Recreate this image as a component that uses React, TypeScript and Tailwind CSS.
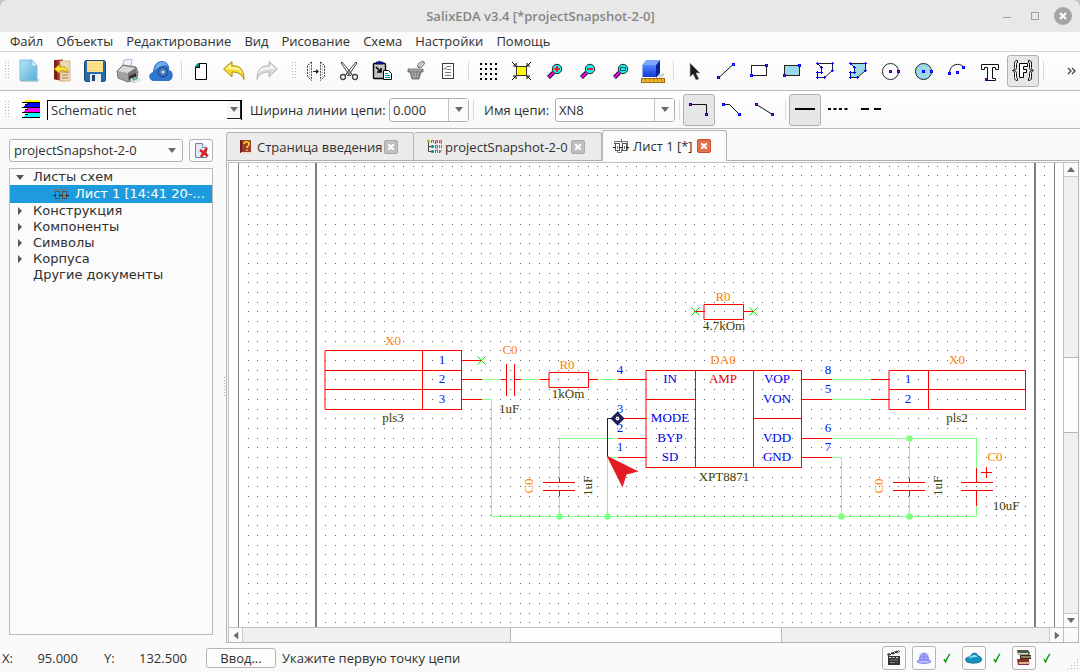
import React, { useState } from "react";

type Kids = { children?: React.ReactNode };

/* ---------- shared pieces ---------- */

function Glyph({ children }: Kids) {
  return (
    <svg width="24" height="24" viewBox="0 0 24 24" fill="none" aria-hidden="true">
      {children}
    </svg>
  );
}

function Tool({ label, pressed, children }: Kids & { label: string; pressed?: boolean }) {
  return (
    <button
      type="button"
      aria-label={label}
      aria-pressed={pressed}
      className={
        pressed
          ? "mr-px flex h-8 w-8 shrink-0 items-center justify-center rounded-[3px] border border-[#b0b0b0] bg-[#e6e6e6]"
          : "mr-px flex h-8 w-8 shrink-0 items-center justify-center rounded-[3px] border border-transparent"
      }
    >
      {children}
    </button>
  );
}

function Sep() {
  return (
    <span className="flex w-[7px] shrink-0 justify-center">
      <span className="h-5 w-px bg-[#dadada]" />
    </span>
  );
}

function Grip() {
  return (
    <svg width="5" height="18" viewBox="0 0 5 18" fill="#b4b4b4" className="shrink-0" aria-hidden="true">
      {[0, 3, 6, 9, 12, 15].map((y) => (
        <g key={y}>
          <rect x="0" y={y} width="1" height="1" />
          <rect x="3" y={y} width="1" height="1" />
        </g>
      ))}
    </svg>
  );
}

function Down({ className = "" }: { className?: string }) {
  return (
    <svg width="8" height="5" viewBox="0 0 8 5" fill="#6a6a6a" className={className} aria-hidden="true">
      <path d="M0 0h8L4 5z" />
    </svg>
  );
}

/* ---------- toolbar drawings ---------- */

const NewIcon = () => (
  <Glyph>
    <defs>
      <linearGradient id="sheet" x1="0" y1="0" x2="1" y2="1">
        <stop offset="0" stopColor="#b9e4f5" />
        <stop offset="1" stopColor="#55aed6" />
      </linearGradient>
    </defs>
    <path d="M6 20h16v2l-2 1H4z" fill="#c8c8c8" />
    <path d="M3 1h12l5 6v14.500H3z" fill="url(#sheet)" stroke="#7cc0de" />
    <path d="M15 1v6h5z" fill="#e4f5fc" stroke="#6fb6d6" strokeWidth=".7" />
  </Glyph>
);

const OpenIcon = () => (
  <Glyph>
    <path d="M4 1l9-.5v22L4 20z" fill="#a5342c" />
    <path d="M4 1l3 1v19l-3-1z" fill="#7c1f1b" />
    <path d="M10 2h10v20H10z" fill="#eed9b4" stroke="#c9a878" strokeWidth=".8" />
    <path d="M12 13h6M12 16h6M12 19h6" stroke="#a67f55" />
    <path d="M4 10l6-5v3c5-1 8 1 8 6-2-2-5-3-8-2v3z" fill="#ffe02b" stroke="#a37a06" strokeWidth=".7" />
  </Glyph>
);

const SaveIcon = () => (
  <Glyph>
    <rect x="1.500" y="1.500" width="21" height="21" rx="2" fill="#2a6aa8" stroke="#1a4474" />
    <rect x="4" y="2" width="16" height="11" fill="#ffe596" />
    <path d="M4 5h16M4 8h16M4 11h16" stroke="#f5cf62" />
    <rect x="7" y="15" width="11" height="8" fill="#e8eef5" />
    <rect x="9" y="16" width="3" height="6" fill="#1d426e" />
  </Glyph>
);

const PrintIcon = () => (
  <Glyph>
    <path d="M6 8L8 1l8-1-1 9z" fill="#edf3fb" stroke="#92a5bf" strokeWidth=".8" />
    <path d="M1 12l6-6 13 2 2 5-1 7-9 3-10-4z" fill="#a2a2a2" stroke="#5f5f5f" strokeWidth=".8" />
    <path d="M2 12l5-5 12 2-7 5z" fill="#d9d9d9" />
    <path d="M12 14l8-5 1 9-9 4z" fill="#777" />
    <path d="M13 17l7-3v4l-7 3z" fill="#333" />
    <path d="M14 20l7-2 3 3-7 3z" fill="#f3f5f8" stroke="#8fa3bc" strokeWidth=".6" />
    <path d="M16 20l3-1 1 2-3 1z" fill="#45b74a" />
    <path d="M20 19l1 1" stroke="#3f68d8" strokeWidth="2" />
  </Glyph>
);

const CloudIcon = () => (
  <Glyph>
    <path d="M4 22c-5-1-5-8 0-9C4 8 7 2 13 2c5 0 8 5 7 9 5 1 5 9 0 11z" fill="#2f74cf" />
    <path d="M5 12c1-5 4-9 8-9 3 0 5 2 6 4-4-2-9 0-14 5z" fill="#74aaee" />
    <circle cx="14" cy="13" r="4.500" fill="#6c98d8" stroke="#1f4c90" strokeWidth="1.300" />
    <path d="M14 8v10M9 13h10M10.500 9.500l7 7M17.500 9.500l-7 7" stroke="#1f4c90" strokeWidth=".9" />
    <circle cx="14" cy="13" r="1.600" fill="#cfe0f8" />
  </Glyph>
);

const PageIcon = () => (
  <Glyph>
    <path d="M10.500 4.500h7v16h-11v-12z" fill="#fff" stroke="#000" />
    <path d="M6 9V7l3-3h2v5z" fill="#0b8a83" />
    <path d="M6.500 8.500h4v-4" stroke="#000" />
  </Glyph>
);

const UndoIcon = () => (
  <Glyph>
    <path d="M1.500 10L10 2.500V7c8-1 12 4 12 13.500-2-5-5.500-7.500-12-7.500v5z" fill="#f6dc22" stroke="#a88a18" />
    <path d="M3.500 10L9 5v3c6-.5 10 1 12 7-3-4-7-5-12-4.500z" fill="#fff59a" />
  </Glyph>
);

const RedoIcon = () => (
  <Glyph>
    <path d="M22.500 10L14 2.500V7C6 6 2 11 2 20.500c2-5 5.500-7.500 12-7.500v5z" fill="#d9d9d9" stroke="#b7b7b7" />
    <path d="M20.500 10L15 5v3c-6-.5-10 1-12 7 3-4 7-5 12-4.500z" fill="#f4f4f4" />
  </Glyph>
);

const MirrorIcon = () => (
  <Glyph>
    <path d="M3.500 6.500l4-4v19l-4-4zM20.500 6.500l-4-4v19l4-4z" stroke="#4a4a4a" strokeDasharray="2 1" />
    <path d="M5.500 5v14M18.500 5v14" stroke="#aaa" strokeDasharray="1 1" />
    <path d="M9 12.500h4" stroke="#222" />
    <path d="M12 10l3 2.500-3 2.500z" fill="#222" />
  </Glyph>
);

const CutIcon = () => (
  <Glyph>
    <path d="M4 4l1-1 10 12-2 2zM20 4l-1-1L9 15l2 2z" fill="#fff" stroke="#444" />
    <circle cx="6" cy="18" r="2.500" stroke="#444" strokeWidth="1.300" />
    <circle cx="18" cy="18" r="2.500" stroke="#444" strokeWidth="1.300" />
    <path d="M8 16.500l4-4 4 4" stroke="#444" />
  </Glyph>
);

const PasteIcon = () => (
  <Glyph>
    <rect x="3.500" y="4.500" width="12" height="15" rx="1" fill="#c4c4c4" stroke="#000" strokeWidth="1.400" />
    <path d="M6 5h7V3h-2L9.500 2 8 3H6z" fill="#1414d8" stroke="#000" strokeWidth=".6" />
    <path d="M6 8l5 5M11 9v4H7" stroke="#000" strokeWidth="1.600" />
    <path d="M13.500 11.500h5l3 3v6h-8z" fill="#fff" stroke="#000" />
    <path d="M15 14.500h3M15 16.500h5M15 18.500h5" stroke="#00a8c8" />
  </Glyph>
);

const BinIcon = () => (
  <Glyph>
    <path d="M5 10h15v3h-2l-2 7H9l-2-7H5z" fill="#8b8b8b" stroke="#5f5f5f" strokeWidth=".8" />
    <path d="M6 11h13" stroke="#b9b9b9" />
    <path d="M9.500 14l1 5M12.500 14v5M15.500 14l-1 5" stroke="#bcbcbc" strokeWidth=".7" />
    <ellipse cx="18" cy="5.500" rx="3.800" ry="2" transform="rotate(-38 18 5.500)" fill="#fff" stroke="#666" />
    <path d="M15.500 7.500l5-4" stroke="#666" strokeWidth=".8" />
  </Glyph>
);

const ListIcon = () => (
  <Glyph>
    <rect x="6.500" y="4.500" width="11" height="15" fill="#fff" stroke="#3a3a3a" />
    <path d="M11 7.500h4M11 10.500h4M9 13.500h6M9 16.500h6M8 9l1 1.500 2-3" stroke="#777" />
  </Glyph>
);

const GridIcon = () => (
  <Glyph>
    {[4, 9, 14, 19].map((y) =>
      [4, 9, 14, 19].map((x) => <rect key={`${x}-${y}`} x={x} y={y} width="2" height="2" fill="#000" />)
    )}
  </Glyph>
);

const FitIcon = () => (
  <Glyph>
    <rect x="7.500" y="7.500" width="10" height="9" fill="#ff0" stroke="#333" />
    <path
      d="M3 3l4 4M7 4v3H4M22 3l-4 4M18 4v3h3M3 21l4-4M4 17h3v3M22 21l-4-4M21 17h-3v3"
      stroke="#000"
    />
  </Glyph>
);

function Lens({ children }: Kids) {
  return (
    <Glyph>
      <path d="M6.500 18.500l5-5" stroke="#000" strokeWidth="4" />
      <path d="M6.500 18.500l5-5" stroke="#f0f" strokeWidth="2.200" />
      <circle cx="15" cy="10" r="4.700" fill="#18f0f0" stroke="#222" />
      {children}
    </Glyph>
  );
}

const CubeIcon = () => (
  <Glyph>
    <defs>
      <linearGradient id="face" x1="0" y1="0" x2="0" y2="1">
        <stop offset="0" stopColor="#4f86ff" />
        <stop offset="1" stopColor="#1238d8" />
      </linearGradient>
    </defs>
    <path d="M17 16l6-2v3l-5 2z" fill="#cfcfcf" />
    <path d="M1 6l4-5h14l-4 5z" fill="#7ea8ff" />
    <path d="M15 6l4-5v13l-4 5z" fill="#0a249c" />
    <rect x="1.500" y="6" width="13.500" height="12" fill="url(#face)" />
    <rect x=".5" y="19.500" width="23" height="4" fill="#f2b733" stroke="#9c6a11" />
    <path d="M4.500 20v2M8.500 20v2M12.500 20v2M16.500 20v2M20.500 20v2" stroke="#b0781a" />
  </Glyph>
);

const CursorIcon = () => (
  <Glyph>
    <path d="M9 4v14l3-3 3 6 3-1-3-6h4z" fill="#1c1c1c" stroke="#aaa" strokeWidth=".7" />
  </Glyph>
);

function Node({ x, y }: { x: number; y: number }) {
  return (
    <g shapeRendering="crispEdges">
      <rect x={x - 1} y={y - 1} width="3" height="3" fill="#00f" />
      <rect x={x} y={y} width="1" height="1" fill="#d02050" />
    </g>
  );
}

const PolyIcon = ({ fill }: { fill: string }) => (
  <Glyph>
    <path d="M4.500 4.500h15v7l-8 7h-7v-5h4v-5z" fill={fill} stroke="#222" />
    {[[4, 4], [19, 4], [19, 11], [11, 18], [4, 18], [4, 13], [8, 13], [8, 8]].map(([x, y]) => (
      <path key={`${x}-${y}`} d={`M${x - 1} ${y + 0.5}h3M${x + 0.5} ${y - 1}v3`} stroke="#00f" />
    ))}
  </Glyph>
);

const TextIcon = () => (
  <Glyph>
    <path d="M3.500 5.500h17v5h-3v-2h-3v11h3v2h-10v-2h2v-11h-3v2h-3z" fill="#fff" stroke="#111" />
    <Node x={8} y={20} />
  </Glyph>
);

const FieldIcon = () => (
  <Glyph>
    <path
      d="M6.500 1.500c-3 0-3 2-3 4v3c0 2-1 3-2 3 1 0 2 1 2 3v3c0 2 0 4 3 4v-2c-1 0-1-1-1-2v-3c0-1-1-3-2-3 1 0 2-2 2-3v-3c0-1 0-2 1-2zM17.500 1.500c3 0 3 2 3 4v3c0 2 1 3 2 3-1 0-2 1-2 3v3c0 2 0 4-3 4v-2c1 0 1-1 1-2v-3c0-1 1-3 2-3-1 0-2-2-2-3v-3c0-1 0-2-1-2z"
      fill="#fff"
      stroke="#000"
    />
    <path d="M8.500 4.500h8v3h-4v3h3v3h-3v5h-4z" fill="#fff" stroke="#000" />
  </Glyph>
);

/* Small two-block schematic used for sheets. */
function SheetIcon() {
  return (
    <svg width="16" height="15" viewBox="0 0 16 15" fill="none" aria-hidden="true" className="shrink-0">
      <path d="M1.500 5V2.500H14.500V11.500M8.500 0v4M4.500 12v1.500h4V10" stroke="#777" />
      <rect x="2.500" y="4.500" width="4" height="7" stroke="#555" />
      <rect x="9.500" y="4.500" width="4" height="7" stroke="#555" />
      <path d="M0 8.500h3M6 8.500h4M13 8.500h3" stroke="#222" />
      <path d="M4 7h1v3H4zM11 7h1v3h-1z" fill="#777" />
    </svg>
  );
}

function Cross({ active }: { active?: boolean }) {
  return (
    <button
      type="button"
      aria-label="Закрыть вкладку"
      className={
        active
          ? "flex h-[14px] w-[14px] items-center justify-center rounded-[2px] border border-[#cf4c30] bg-[#e4714f]"
          : "flex h-[14px] w-[14px] items-center justify-center rounded-[2px] border border-[#a8a8a8] bg-[#c0c0c0]"
      }
    >
      <svg width="6" height="6" viewBox="0 0 6 6" stroke="#fff" strokeWidth="2" aria-hidden="true">
        <path d="M0 0l6 6M6 0L0 6" />
      </svg>
    </button>
  );
}

/* ---------- schematic ---------- */

const STEP = 9.715;
const dots = (() => {
  let d = "";
  for (let j = 0; j < 48; j++) {
    const y = Math.round(165.7 + j * STEP);
    for (let i = -8; i < 76; i++) d += `M${Math.round(325.3 + i * STEP)} ${y}h1`;
  }
  return d;
})();

type Label = [string, number, number];

const refs: Label[] = [
  ["X0", 393, 345], ["C0", 510, 354], ["R0", 567, 369], ["R0", 723, 301],
  ["DA0", 723, 364], ["X0", 957, 364], ["C0", 995, 461],
];
const values: Label[] = [
  ["pls3", 393, 422], ["1uF", 509, 413], ["1kOm", 568, 398], ["4.7kOm", 724, 330],
  ["XPT8871", 724, 481], ["pls2", 957, 422], ["10uF", 1006, 510],
];
const pins: Label[] = [
  ["1", 442, 364], ["2", 442, 383], ["3", 442, 403], ["4", 620, 374], ["3", 620, 413],
  ["2", 620, 432], ["1", 620, 451], ["8", 828, 374], ["5", 828, 393], ["6", 828, 432],
  ["7", 828, 451], ["1", 908, 383], ["2", 908, 403],
];
const names: Label[] = [
  ["IN", 670, 383], ["MODE", 670, 422], ["BYP", 670, 442], ["SD", 670, 461],
  ["VOP", 777, 383], ["VON", 777, 403], ["VDD", 777, 442], ["GND", 777, 461],
];

function Labels({ items, fill }: { items: Label[]; fill: string }) {
  return (
    <g fill={fill}>
      {items.map(([t, x, y]) => (
        <text key={`${t}-${x}-${y}`} x={x} y={y}>
          {t}
        </text>
      ))}
    </g>
  );
}

function Schematic() {
  return (
    <svg
      className="absolute inset-0 h-full w-full font-['Liberation_Serif',serif] text-[13px]"
      fill="none"
      role="img"
      aria-label="Лист 1"
    >
      <g transform="translate(-229 -163)">
        <g shapeRendering="crispEdges">
          <path d={dots} transform="translate(0 .5)" stroke="#606060" />
          <path d="M238.500 163V1200M1054.500 163V1200" stroke="#808080" />
          <path d="M316 163V1200M1035 163V1200" stroke="#808080" strokeWidth="2" />
        </g>
        <g textAnchor="middle">
          <Labels items={refs} fill="#ff8000" />
          <Labels items={values} fill="#404000" />
          <Labels items={pins} fill="#0020ff" />
          <Labels items={names} fill="#0000f0" />
          <text x="723" y="383" fill="#f00000">AMP</text>
          <text transform="translate(533 486) rotate(-90)" fill="#ff8000">C0</text>
          <text transform="translate(592 486) rotate(-90)" fill="#404000">1uF</text>
          <text transform="translate(883 486) rotate(-90)" fill="#ff8000">C0</text>
          <text transform="translate(942 486) rotate(-90)" fill="#404000">1uF</text>
        </g>
        <g transform="translate(.5 .5)">
          <path
            stroke="#80ff80"
            strokeLinecap="square"
            d="M481 379H501M481 399H491V516H976V505M520 379H540M597 379H618M618 438H559V478M559 495V516M618 457H607V516M831 379H871M831 399H871M831 438H976V468M831 457H841V516M909 438V478M909 495V516"
          />
          <path
            stroke="#f00"
            strokeLinecap="square"
            d="M325 350H461V409H325ZM422 350V409M325 370H461M325 389H461M461 360H481M461 379H481M461 399H481M501 379H506M506 364V395M514 364V395M514 379H520M540 379H549M549 372H588V387H549ZM588 379H597M618 379H646M646 370H801V467H646ZM695 370V467M753 370V467M646 399H695M753 418H801M622 418H646M618 438H646M618 457H646M801 379H831M801 399H831M801 438H831M801 457H831M871 379H889M871 399H889M889 370H1025V409H889ZM928 370V409M889 389H1025M704 304H743V319H704ZM695 311H704M743 311H753M559 478V482M559 490V495M543 482H574M543 490H574M909 478V482M909 490V495M893 482H924M893 490H924M976 468V482M976 490V505M961 482H992M961 490H992M981 472H991M986 467V477"
          />
          <path d="M477 356l8 8M477 364l8-8M691 307l8 8M691 315l8-8M749 307l8 8M749 315l8-8" stroke="#00e000" />
          {[[909, 438], [559, 516], [607, 516], [841, 516], [909, 516]].map(([x, y]) => (
            <circle key={`${x}-${y}`} cx={x} cy={y} r="3.200" fill="#80ff80" />
          ))}
          <path d="M617 418H607V456" stroke="#1f1a5c" />
          <path d="M617 411l7 7-7 7-7-7z" fill="#1f1a5c" />
          <circle cx="617" cy="418" r="1.900" fill="#fff" />
          <circle cx="617" cy="418" r=".8" fill="#20a020" />
          <path d="M606 455L638 471L626 474L622 487Z" fill="#e31b23" />
        </g>
      </g>
    </svg>
  );
}

/* ---------- page ---------- */

const menus = ["Файл", "Объекты", "Редактирование", "Вид", "Рисование", "Схема", "Настройки", "Помощь"];
const folders = ["Конструкция", "Компоненты", "Символы", "Корпуса"];

function EditCombo({ id, initial, className }: { id: string; initial: string; className: string }) {
  const [value, setValue] = useState(initial);
  return (
    <div className={`flex h-6 shrink-0 rounded-[3px] border border-[#b0b0b0] bg-white ${className}`}>
      <input
        id={id}
        value={value}
        onChange={(e) => setValue(e.target.value)}
        className="min-w-0 flex-1 bg-transparent pl-[3px] outline-none"
      />
      <button
        type="button"
        aria-label="Открыть список"
        className="flex w-5 items-center justify-center border-l border-[#c4c4c4] bg-[#fbfbfb]"
      >
        <Down />
      </button>
    </div>
  );
}

function StatusButton({ label, children }: Kids & { label: string }) {
  return (
    <button
      type="button"
      aria-label={label}
      className="flex h-6 w-6 items-center justify-center rounded-[3px] border border-[#b4b4b4] bg-[#fcfcfc]"
    >
      <svg width="18" height="18" viewBox="0 0 18 18" fill="none" aria-hidden="true">
        {children}
      </svg>
    </button>
  );
}

function Tick() {
  return (
    <span className="flex w-[26px] justify-center pr-1">
      <svg width="8" height="10" viewBox="0 0 8 10" fill="none" aria-hidden="true">
        <path d="M1 6l1.500 3C4 5.500 5 3 7 1" stroke="#0a960a" strokeWidth="1.400" />
      </svg>
    </span>
  );
}

export default function App() {
  return (
    <div className="flex h-screen flex-col overflow-hidden bg-[#c4c4c4] font-['Open_Sans','Noto_Sans',sans-serif] text-[13px] leading-4 text-[#303030]">
      <header className="flex h-8 shrink-0 items-center rounded-t-lg bg-[#e8e8e8] pr-2">
        <span className="w-[78px]" />
        <h1 className="flex-1 text-center font-semibold text-[#858585]">SalixEDA v3.4 [*projectSnapshot-2-0]</h1>
        <div className="flex items-center gap-[15px]">
          <button type="button" aria-label="Свернуть" className="flex h-1 w-[13px] items-end">
            <span className="h-px w-2 bg-[#a0a0a0]" />
          </button>
          <button type="button" aria-label="Развернуть" className="h-2 w-2 border border-[#a0a0a0]" />
          <button
            type="button"
            aria-label="Закрыть"
            className="flex h-[18px] w-[18px] items-center justify-center rounded-full bg-[#a4a4a4]"
          >
            <svg width="8" height="8" viewBox="0 0 8 8" stroke="#fff" strokeWidth="2.200" aria-hidden="true">
              <path d="M1 1l6 6M7 1L1 7" />
            </svg>
          </button>
        </div>
      </header>

      <nav className="flex h-5 shrink-0 items-center gap-[13px] border-b border-[#d8d8d8] bg-[#fbfbfb] pb-px pl-[10px]">
        {menus.map((m) => (
          <button key={m} type="button">
            {m}
          </button>
        ))}
      </nav>

      <div className="flex h-[39px] shrink-0 items-center border-b border-[#bababa] bg-linear-to-b from-white to-[#f8f8f8] pl-[5px]">
        <Grip />
        <span className="w-[3px] shrink-0" />
        <Tool label="Создать"><NewIcon /></Tool>
        <Tool label="Открыть"><OpenIcon /></Tool>
        <Tool label="Сохранить"><SaveIcon /></Tool>
        <Tool label="Печать"><PrintIcon /></Tool>
        <Tool label="Облако"><CloudIcon /></Tool>
        <Sep />
        <Tool label="Страница"><PageIcon /></Tool>
        <Tool label="Отменить"><UndoIcon /></Tool>
        <Tool label="Повторить"><RedoIcon /></Tool>
        <span className="flex w-4 shrink-0 items-center justify-end pr-[3px]"><Grip /></span>
        <Tool label="Отразить"><MirrorIcon /></Tool>
        <Tool label="Вырезать"><CutIcon /></Tool>
        <Tool label="Вставить"><PasteIcon /></Tool>
        <Tool label="Удалить"><BinIcon /></Tool>
        <Tool label="Свойства"><ListIcon /></Tool>
        <Sep />
        <Tool label="Сетка"><GridIcon /></Tool>
        <Tool label="Вписать"><FitIcon /></Tool>
        <Tool label="Увеличить"><Lens><path d="M15 7v6M12 10h6" stroke="#f00" strokeWidth="1.600" /></Lens></Tool>
        <Tool label="Уменьшить"><Lens><path d="M12 10h6" stroke="#f00" strokeWidth="1.600" /></Lens></Tool>
        <Tool label="Масштаб окна"><Lens><rect x="12.500" y="8.500" width="5" height="3" stroke="#05606a" /></Lens></Tool>
        <Tool label="Трёхмерный вид"><CubeIcon /></Tool>
        <Sep />
        <Tool label="Выбор"><CursorIcon /></Tool>
        <Tool label="Линия">
          <Glyph><path d="M5 18.500l14-13" stroke="#111" /><Node x={4} y={18} /><Node x={19} y={5} /></Glyph>
        </Tool>
        <Tool label="Прямоугольник">
          <Glyph><rect x="4.500" y="6.500" width="15" height="10" fill="#fff" stroke="#222" /><Node x={4} y={16} /><Node x={19} y={6} /></Glyph>
        </Tool>
        <Tool label="Закрашенный прямоугольник">
          <Glyph><rect x="4.500" y="6.500" width="15" height="10" fill="#9bd8ea" stroke="#222" /><Node x={4} y={16} /><Node x={19} y={6} /></Glyph>
        </Tool>
        <Tool label="Полигон"><PolyIcon fill="none" /></Tool>
        <Tool label="Закрашенный полигон"><PolyIcon fill="#9bd8ea" /></Tool>
        <Tool label="Окружность">
          <Glyph><circle cx="11.500" cy="12.500" r="8" fill="#fff" stroke="#222" /><Node x={11} y={12} /><Node x={19} y={12} /></Glyph>
        </Tool>
        <Tool label="Круг">
          <Glyph><circle cx="11.500" cy="12.500" r="8" fill="#9bd8ea" stroke="#222" /><Node x={11} y={12} /><Node x={19} y={12} /></Glyph>
        </Tool>
        <Tool label="Дуга">
          <Glyph><path d="M4.500 14c0-9 10-11 14-6" stroke="#222" /><Node x={4} y={14} /><Node x={12} y={13} /><Node x={18} y={8} /></Glyph>
        </Tool>
        <Tool label="Текст"><TextIcon /></Tool>
        <Tool label="Поле" pressed><FieldIcon /></Tool>
        <Sep />
        <button type="button" aria-label="Ещё" className="ml-auto pr-[3px]">
          <svg width="10" height="8" viewBox="0 0 10 8" fill="none" stroke="#444" strokeWidth="1.300" aria-hidden="true">
            <path d="M1 1l3 3-3 3M5 1l3 3-3 3" />
          </svg>
        </button>
      </div>

      <div className="flex h-[38px] shrink-0 items-center border-b border-[#bababa] bg-linear-to-b from-white to-[#f8f8f8] pl-[5px]">
        <Grip />
        <svg width="18" height="19" viewBox="0 0 18 19" className="ml-3 shrink-0" shapeRendering="crispEdges" aria-hidden="true">
          <path d="M3 0h15v3H0z" fill="#ff0" />
          <path d="M5 3h13v4H2z" fill="#00f" />
          <path d="M5 8h13v4H2z" fill="#f0f" />
          <path d="M5 13h13v4H2z" fill="#0ff" />
          <path d="M0 2h18v1H0zM0 7h18v1H0zM0 12h18v1H0zM0 17h18v1H0zM3 4h3v1H3zM3 9h3v1H3zM3 14h3v1H3z" fill="#000" />
        </svg>
        <div className="relative ml-[7px] w-[195px] shrink-0">
          <select
            aria-label="Слой"
            className="h-5 w-full appearance-none border-t border-r border-l border-t-black border-r-black border-l-black bg-white pl-[3px] outline-none"
          >
            <option>Schematic net</option>
          </select>
          <span className="pointer-events-none absolute top-px right-px flex h-[18px] w-[14px] items-center justify-center border-r border-b border-[#222] bg-[#f6f6f6]">
            <Down />
          </span>
        </div>
        <label htmlFor="width" className="ml-2 w-[139px] shrink-0">Ширина линии цепи:</label>
        <EditCombo id="width" initial="0.000" className="w-20" />
        <span className="w-px shrink-0" /><Sep />
        <label htmlFor="net" className="ml-[7px] w-[71px] shrink-0">Имя цепи:</label>
        <EditCombo id="net" initial="XN8" className="w-[120px]" />
        <span className="w-px shrink-0" /><Sep />
        <Tool label="Прямой угол" pressed>
          <Glyph><path d="M3.500 6.500h16v10" stroke="#111" /><Node x={3} y={6} /><Node x={19} y={16} /></Glyph>
        </Tool>
        <Tool label="Скошенный угол">
          <Glyph><path d="M3.500 6.500h6l10 10" stroke="#111" /><Node x={3} y={6} /><Node x={19} y={16} /></Glyph>
        </Tool>
        <Tool label="Произвольно">
          <Glyph><path d="M3.500 6.500l16 10" stroke="#111" /><Node x={3} y={6} /><Node x={19} y={16} /></Glyph>
        </Tool>
        <Sep />
        <Tool label="Сплошная" pressed>
          <Glyph><path d="M2 11h20" stroke="#000" strokeWidth="2" /></Glyph>
        </Tool>
        <Tool label="Точечная">
          <Glyph><path d="M2 11h20" stroke="#000" strokeWidth="2" strokeDasharray="3 2.500" /></Glyph>
        </Tool>
        <Tool label="Штриховая">
          <Glyph><path d="M2 11h8M15 11h7" stroke="#000" strokeWidth="2" /></Glyph>
        </Tool>
      </div>

      <main className="flex min-h-0 flex-1 bg-[#fafafa]">
        <aside className="flex w-[213px] shrink-0 flex-col gap-[6px] pt-[10px] pb-2 pl-[9px]">
          <div className="flex gap-[6px]">
            <div className="relative flex-1">
              <select
                aria-label="Проект"
                className="h-[23px] w-full appearance-none rounded-[3px] border border-[#b4b4b4] bg-[#fcfcfc] pb-px pl-1 outline-none"
              >
                <option>projectSnapshot-2-0</option>
              </select>
              <Down className="pointer-events-none absolute top-[9px] right-[7px]" />
            </div>
            <button
              type="button"
              aria-label="Закрыть проект"
              className="flex h-[23px] w-6 items-center justify-center rounded-[3px] border border-[#b4b4b4] bg-[#fcfcfc]"
            >
              <svg width="18" height="17" viewBox="0 0 18 17" fill="none" aria-hidden="true">
                <path d="M3.500 1.500h7l4 4v10h-11z" fill="#dfe8f4" stroke="#6a83a6" />
                <path d="M10.500 1.500v4h4" fill="#fff" stroke="#5c7698" strokeWidth=".8" />
                <path d="M8 8l8 6M15 6l-6 9" stroke="#e02020" strokeWidth="2.500" />
              </svg>
            </button>
          </div>
          <ul className="min-h-0 flex-1 border border-[#bababa] bg-[#fbfbfb] font-['DejaVu_Sans',sans-serif]">
            <li className="flex h-4 items-center">
              <svg width="8" height="5" viewBox="0 0 8 5" className="mr-[9px] ml-[6px] fill-[#555]" aria-hidden="true">
                <path d="M0 0h8L4 5z" />
              </svg>
              Листы схем
            </li>
            <li className="flex h-[18px] items-center gap-[6px] bg-[#1e9bdc] pl-[43px] text-white">
              <SheetIcon />
              <span className="min-w-0 truncate">Лист 1 [14:41 20-...</span>
            </li>
            {folders.map((f) => (
              <li key={f} className="flex h-4 items-center">
                <svg width="4" height="8" viewBox="0 0 4 8" className="mr-[11px] ml-2 fill-[#555]" aria-hidden="true">
                  <path d="M0 0v8l4-4z" />
                </svg>
                {f}
              </li>
            ))}
            <li className="flex h-4 items-center pl-[23px]">Другие документы</li>
          </ul>
        </aside>

        <div className="flex w-[13px] shrink-0 items-center justify-center">
          <svg width="2" height="19" viewBox="0 0 2 19" fill="#a8a8a8" className="ml-[10px]" aria-hidden="true">
            {[0, 3, 6, 9, 12, 15, 18].map((y) => <rect key={y} y={y} width="1" height="1" />)}
          </svg>
        </div>

        <section className="flex min-w-0 flex-1 flex-col pt-px pr-px">
          <div className="flex h-[31px] shrink-0 items-end border-b border-[#b0b0b0]">
            <div className="flex h-7 w-[188px] shrink-0 items-center rounded-t-[3px] border border-b-0 border-[#b4b4b4] bg-[#ebebeb] pl-3">
              <svg width="14" height="15" viewBox="0 0 14 15" aria-hidden="true">
                <rect x="1" y="1" width="11" height="13" rx="1" fill="#9c3c36" />
                <rect x="1" y="1" width="2" height="13" fill="#6e1f1c" />
                <path d="M2 13h10v1.500H2z" fill="#e6d8c0" />
                <path d="M5 5c0-3 5-3 5 0 0 2-2 2-2 4M7.900 10.500v1.500" stroke="#ffd820" strokeWidth="1.600" fill="none" />
              </svg>
              <button type="button" className="ml-1 w-[127px] text-left whitespace-nowrap">Страница введения</button>
              <Cross />
            </div>
            <div className="flex h-7 w-[188px] shrink-0 items-center rounded-t-[3px] border border-b-0 border-l-0 border-[#b4b4b4] bg-[#ebebeb] pl-3">
              <svg width="16" height="15" viewBox="0 0 16 15" aria-hidden="true" fill="none">
                <path d="M2.500 2v10.500h4M2.500 7.500h4" stroke="#444" />
                <circle cx="2.500" cy="2" r="1.600" fill="#b9b900" />
                <circle cx="6.500" cy="7.500" r="1.600" fill="#008b8b" />
                <circle cx="6.500" cy="12.500" r="1.600" fill="#008b8b" />
                <path d="M5.500 4V1.500h2V4M9.500 5V1.500h2v2h-2M13.500 1.500h2v2.500h-2z" stroke="#b03030" strokeWidth=".8" />
                <path d="M9.500 6.500h2v2.500h-2zM13.500 6v3M15.500 6v3M9.500 14v-3h2v3M13.500 11v3M15.500 11l-2 3" stroke="#555" strokeWidth=".8" />
              </svg>
              <button type="button" className="ml-[3px] w-[126px] text-left whitespace-nowrap">projectSnapshot-2-0</button>
              <Cross />
            </div>
            <div className="-mb-px flex h-[31px] w-[125px] shrink-0 items-center rounded-t-[3px] border border-b-0 border-[#b4b4b4] bg-[#fbfbfb] pl-[10px]">
              <SheetIcon />
              <button type="button" className="ml-1 w-16 text-left whitespace-nowrap">Лист 1 [*]</button>
              <Cross active />
            </div>
          </div>

          <div className="flex min-h-0 flex-1 flex-col border border-t-0 border-[#b4b4b4] pt-px pl-px">
            <div className="grid min-h-0 flex-1 grid-cols-[minmax(0,1fr)_15px] grid-rows-[minmax(0,1fr)_15px] border-t border-l border-[#c0c0c0]">
              <div className="relative overflow-hidden bg-white">
                <Schematic />
              </div>
              <div className="flex flex-col border-l border-[#c0c0c0] bg-[#f0f0f0]">
                <button type="button" aria-label="Вверх" className="flex h-[14px] items-center justify-center border-b border-[#c8c8c8] bg-[#fbfbfb]">
                  <Down className="rotate-180" />
                </button>
                <div className="flex flex-1 flex-col">
                  <span className="flex-[181]" />
                  <span className="flex-[74] border-y border-[#b8b8b8] bg-[#fdfdfd]" />
                  <span className="flex-[181]" />
                </div>
                <button type="button" aria-label="Вниз" className="flex h-[14px] items-center justify-center border-t border-[#c8c8c8] bg-[#fbfbfb]">
                  <Down />
                </button>
              </div>
              <div className="flex border-t border-[#c0c0c0] bg-[#f0f0f0]">
                <button type="button" aria-label="Влево" className="flex w-[14px] items-center justify-center border-r border-[#c8c8c8] bg-[#fbfbfb]">
                  <Down className="rotate-90" />
                </button>
                <div className="flex flex-1">
                  <span className="flex-[268]" />
                  <span className="flex-[270] border-x border-[#b8b8b8] bg-[#fdfdfd]" />
                  <span className="flex-[268]" />
                </div>
                <button type="button" aria-label="Вправо" className="flex w-[14px] items-center justify-center border-l border-[#c8c8c8] bg-[#fbfbfb]">
                  <Down className="-rotate-90" />
                </button>
              </div>
              <div className="border-t border-l border-[#c0c0c0] bg-[#fafafa]" />
            </div>
          </div>
        </section>
      </main>

      <footer className="flex h-[29px] shrink-0 items-center bg-[#fafafa] pl-[2px]">
        <span className="w-5">X:</span>
        <span className="w-14 text-right">95.000</span>
        <span className="ml-[26px] w-5">Y:</span>
        <span className="w-[63px] text-right">132.500</span>
        <button type="button" className="ml-[19px] h-5 w-[70px] rounded-[3px] border border-[#b4b4b4] bg-[#fdfdfd]">
          Ввод...
        </button>
        <output className="ml-[6px]">Укажите первую точку цепи</output>
        <div className="ml-auto flex items-center">
          <StatusButton label="Запись">
            <path d="M2 5l12-4 1 2L3 7z" fill="#333" />
            <path d="M5 4l2 2M9 3l2 2M12 1l2 2" stroke="#eee" />
            <rect x="3" y="7" width="12" height="9" fill="#333" />
            <path d="M4 8.500h10" stroke="#ddd" strokeDasharray="2 1.500" />
            <path d="M5 11h3M9 11h4M5 13.500h5M12 13.500h1" stroke="#888" />
          </StatusButton>
          <span className="w-[6px]" />
          <StatusButton label="Сервер">
            <ellipse cx="9" cy="12.500" rx="7" ry="1.800" fill="#c3c3ff" stroke="#7474e6" />
            <path d="M4 12c-1-11 11-11 10 0z" fill="#8484f4" />
            <path d="M4 6h10M4 9h10M7 3v9M11 3v9" stroke="#b8b8ff" strokeWidth=".7" />
          </StatusButton>
          <Tick />
          <StatusButton label="Облако">
            <path d="M2 13c-3-3-1-5 3-5 2-5 7-5 8-1 4 1 5 4 2 6-3 1.500-10 1.500-13 0z" fill="#1294bd" stroke="#075a80" strokeWidth=".8" />
            <path d="M4 9.500c2-4 7-5 9-1-3-1-6 0-9 1z" fill="#8ce4f6" />
          </StatusButton>
          <Tick />
          <StatusButton label="Библиотека">
            <path d="M2 1h11l2 3-1 2H3z" fill="#465e44" />
            <path d="M3 4h10v1.500H3z" fill="#e4dcc0" />
            <path d="M5 6h11v4H5z" fill="#3b2a1e" />
            <path d="M6 7.500h10v1H6z" fill="#f0d89c" />
            <path d="M2 10h12v6H3z" fill="#8c2e26" />
            <path d="M4 13h11v2H4z" fill="#d8b894" />
          </StatusButton>
          <Tick />
          <svg width="12" height="12" viewBox="0 0 12 12" fill="#b8b8b8" className="mt-[14px] ml-[6px]" aria-hidden="true">
            {[[9, 0], [6, 3], [9, 3], [3, 6], [6, 6], [9, 6], [0, 9], [3, 9], [6, 9], [9, 9]].map(([x, y]) => (
              <rect key={`${x}-${y}`} x={x} y={y} width="1" height="1" />
            ))}
          </svg>
        </div>
      </footer>
    </div>
  );
}
